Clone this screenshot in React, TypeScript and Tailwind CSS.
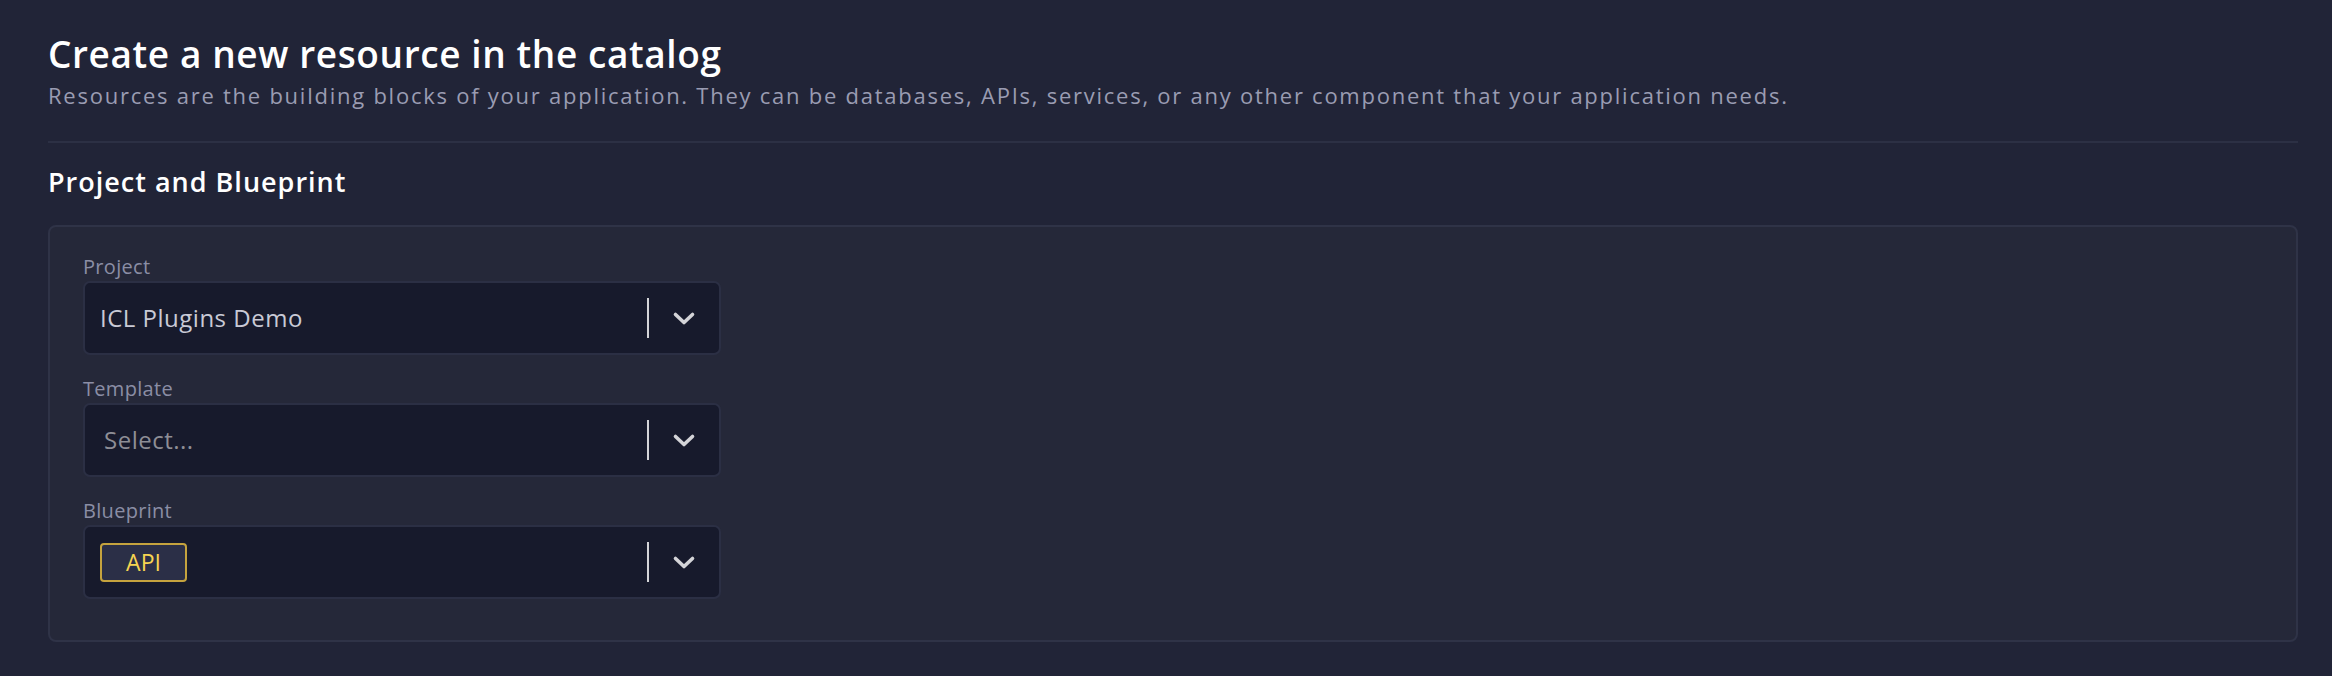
import React from 'react';

const fontStack = { fontFamily: '"Open Sans", "Noto Sans", sans-serif' };

const Chevron: React.FC = () => (
  <svg width="24" height="15" viewBox="0 0 24 15" fill="none">
    <polyline points="3.5,3.5 12,11.5 20.5,3.5" stroke="#d4d4d8" strokeWidth="3.6" strokeLinecap="round" strokeLinejoin="round" />
  </svg>
);

type FieldProps = {
  label: string;
  children: React.ReactNode;
};

const SelectField: React.FC<FieldProps> = ({ label, children }) => (
  <div className="flex flex-col">
    <label className="pt-[3px] mb-[1px] text-[20px] leading-[26px] tracking-[0.3px] text-[#8b8ea5]">{label}</label>
    <div className="flex items-center h-[74px] w-[638px] rounded-[7px] border-2 border-[#2b2f44] bg-[#171a2c]">
      <div className="flex-1 flex items-center pl-[15px]">{children}</div>
      <div className="w-[2px] h-[40px] bg-[#d4d4d8]" />
      <div className="flex items-center justify-center w-[70px]">
        <Chevron />
      </div>
    </div>
  </div>
);

const App: React.FC = () => {
  return (
    <div className="min-h-screen bg-[#212437] pl-[48px] pr-[34px] pt-[32px] pb-[34px]" style={fontStack}>
      {/* Header */}
      <h1 className="text-[37px] leading-[44px] font-semibold tracking-[0.6px] text-white">Create a new resource in the catalog</h1>
      <p className="mt-[4px] text-[22px] leading-[30px] tracking-[1.75px] text-[#9a9cb2]">
        Resources are the building blocks of your application. They can be databases, APIs, services, or any other component that your application needs.
      </p>
      <div className="mt-[31px] h-[2px] bg-[#2c3044]" />

      {/* Project and Blueprint */}
      <h2 className="mt-[21px] text-[27px] leading-[36px] font-semibold tracking-[1px] text-white">Project and Blueprint</h2>
      <div className="mt-[25px] rounded-[8px] border-2 border-[#2f3347] bg-[#252839] pl-[33px] pt-[24px] pb-[41px]">
        <div className="flex flex-col gap-[18px]">
          <SelectField label="Project">
            <span className="text-[24px] tracking-[0.5px] text-[#c9cad6]">ICL Plugins Demo</span>
          </SelectField>
          <SelectField label="Template">
            <span className="pl-[4px] text-[24px] tracking-[0.5px] text-[#8e8e96]">Select...</span>
          </SelectField>
          <SelectField label="Blueprint">
            <span className="flex items-center justify-center h-[39px] w-[87px] rounded-[4px] border-2 border-[#c5a33e] bg-[#2b2f47] text-[23px] text-[#f6d451]">
              API
            </span>
          </SelectField>
        </div>
      </div>
    </div>
  );
};

export default App;
